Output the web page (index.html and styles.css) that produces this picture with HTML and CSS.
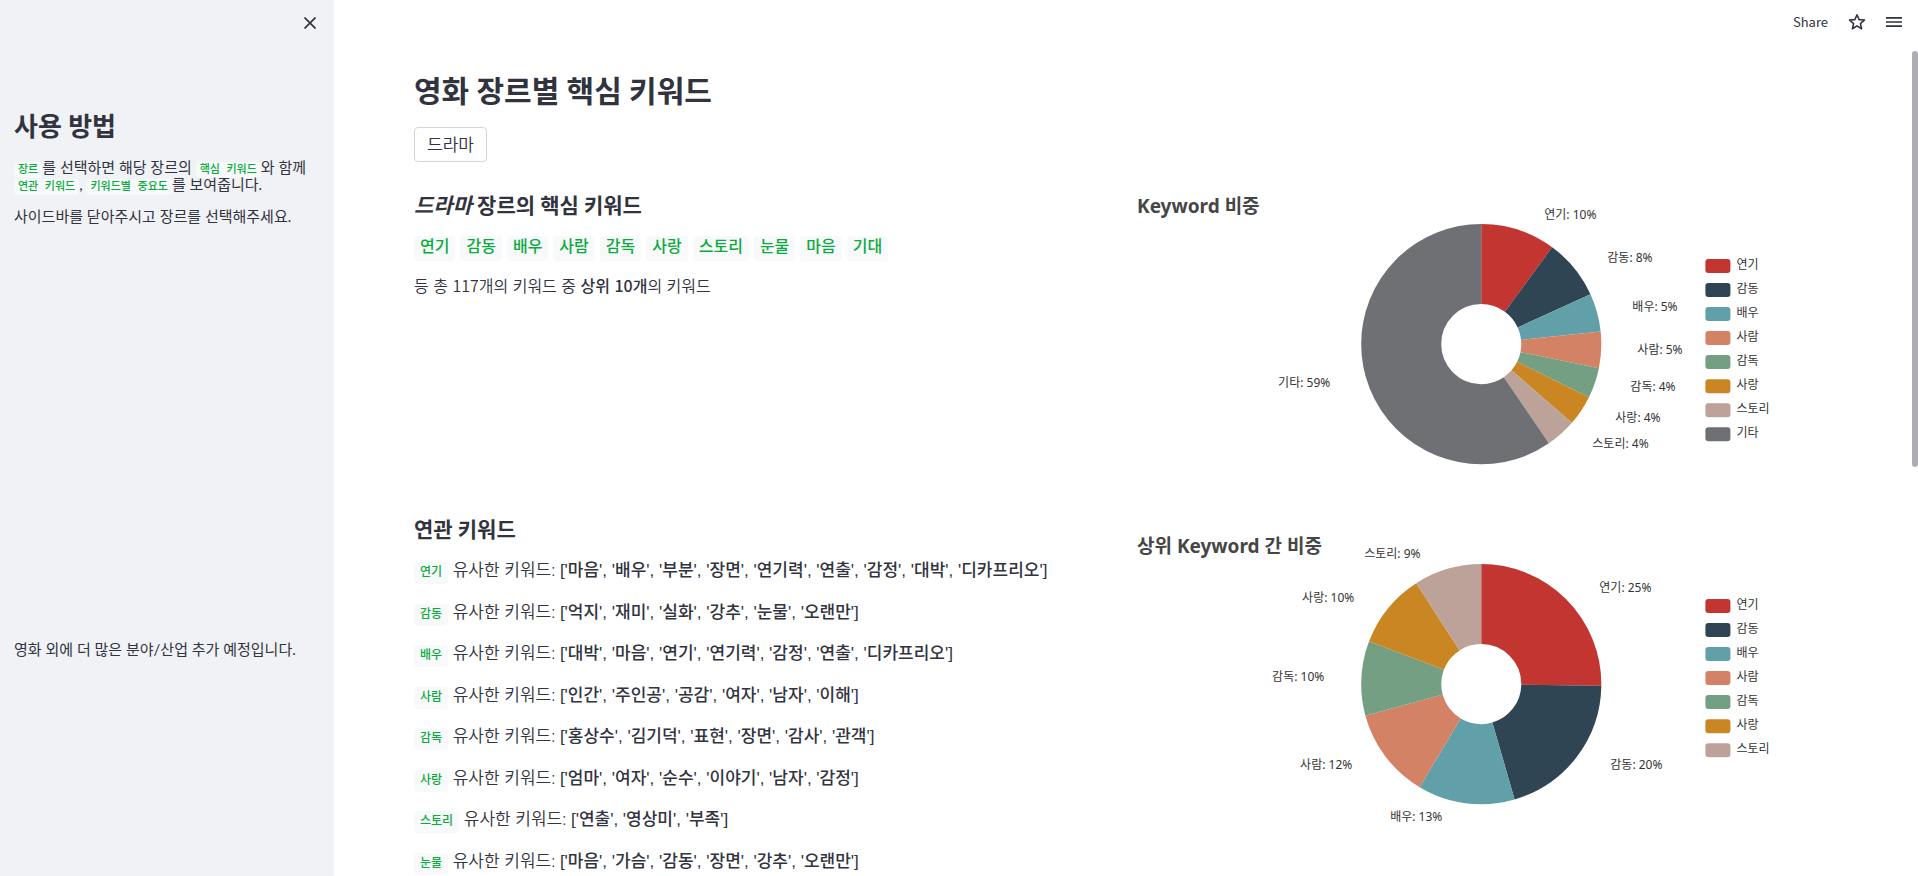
FILE: index.html
```html
<!DOCTYPE html>
<html lang="ko">
<head>
<meta charset="utf-8">
<meta name="viewport" content="width=device-width, initial-scale=1">
<title>영화 장르별 핵심 키워드</title>
<link rel="stylesheet" href="styles.css">
</head>
<body>
<div class="app">
  <aside class="sidebar">
    <button class="close" type="button" aria-label="닫기">
      <svg width="12" height="12" viewBox="0 0 12 12"><path d="M0.5 0.5L11.5 11.5M11.5 0.5L0.5 11.5" stroke="currentColor" stroke-width="1.7" fill="none"/></svg>
    </button>
    <div class="guide">
      <h2>사용 방법</h2>
      <p><code>장르</code>를 선택하면 해당 장르의 <code>핵심 키워드</code>와 함께 <code>연관 키워드</code>, <code>키워드별 중요도</code>를 보여줍니다.</p>
      <p>사이드바를 닫아주시고 장르를 선택해주세요.</p>
    </div>
    <p class="notice">영화 외에 더 많은 분야/산업 추가 예정입니다.</p>
  </aside>

  <div class="view">
    <header class="toolbar">
      <button type="button">Share</button>
      <button type="button" aria-label="즐겨찾기">
        <svg width="18" height="18" viewBox="0 0 16 16"><path d="M8 1.6L9.9 5.9L14.6 6.3L11 9.4L12.1 14L8 11.5L3.9 14L5 9.4L1.4 6.3L6.1 5.9Z" fill="none" stroke="currentColor" stroke-width="1.4" stroke-linejoin="round"/></svg>
      </button>
      <button type="button" aria-label="메뉴">
        <svg width="16" height="12" viewBox="0 0 16 12"><path d="M0 1.8H16M0 6H16M0 10.2H16" stroke="currentColor" stroke-width="1.7"/></svg>
      </button>
    </header>

    <main class="content">
      <h1>영화 장르별 핵심 키워드</h1>
      <button class="genre" type="button">드라마</button>

      <section class="columns summary">
        <div>
          <h3><em>드라마</em> 장르의 핵심 키워드</h3>
          <div class="tags">
            <code>연기</code><code>감동</code><code>배우</code><code>사람</code><code>감독</code><code>사랑</code><code>스토리</code><code>눈물</code><code>마음</code><code>기대</code>
          </div>
          <p class="total">등 총 117개의 키워드 중 <strong>상위 10개</strong>의 키워드</p>
        </div>
        <svg class="chart" viewBox="0 0 700 300" role="img" aria-label="Keyword 비중">
          <text class="chart-title" x="6" y="19">Keyword 비중</text>
          <g class="ring" transform="rotate(-90 350 150)">
            <circle class="c1" cx="350" cy="150" r="80" pathLength="360" stroke-dasharray="36.2 360"/>
            <circle class="c2" cx="350" cy="150" r="80" pathLength="360" stroke-dasharray="29.2 360" stroke-dashoffset="-36.2"/>
            <circle class="c3" cx="350" cy="150" r="80" pathLength="360" stroke-dasharray="18.5 360" stroke-dashoffset="-65.4"/>
            <circle class="c4" cx="350" cy="150" r="80" pathLength="360" stroke-dasharray="17.7 360" stroke-dashoffset="-83.9"/>
            <circle class="c5" cx="350" cy="150" r="80" pathLength="360" stroke-dasharray="14.7 360" stroke-dashoffset="-101.6"/>
            <circle class="c6" cx="350" cy="150" r="80" pathLength="360" stroke-dasharray="14.7 360" stroke-dashoffset="-116.3"/>
            <circle class="c7" cx="350" cy="150" r="80" pathLength="360" stroke-dasharray="14.7 360" stroke-dashoffset="-131"/>
            <circle class="c8" cx="350" cy="150" r="80" pathLength="360" stroke-dasharray="214.3 360" stroke-dashoffset="-145.7"/>
          </g>
          <g class="labels">
            <text x="413" y="25">연기: 10%</text>
            <text x="476" y="68">감동: 8%</text>
            <text x="501" y="117">배우: 5%</text>
            <text x="506" y="160">사람: 5%</text>
            <text x="499" y="197">감독: 4%</text>
            <text x="484" y="228">사랑: 4%</text>
            <text x="461" y="254">스토리: 4%</text>
            <text x="147" y="193">기타: 59%</text>
          </g>
          <g class="legend">
            <rect class="c1" x="574" y="65" width="25" height="14" rx="3"/><text x="605" y="75">연기</text>
            <rect class="c2" x="574" y="89" width="25" height="14" rx="3"/><text x="605" y="99">감동</text>
            <rect class="c3" x="574" y="113" width="25" height="14" rx="3"/><text x="605" y="123">배우</text>
            <rect class="c4" x="574" y="137" width="25" height="14" rx="3"/><text x="605" y="147">사람</text>
            <rect class="c5" x="574" y="161" width="25" height="14" rx="3"/><text x="605" y="171">감독</text>
            <rect class="c6" x="574" y="185" width="25" height="14" rx="3"/><text x="605" y="195">사랑</text>
            <rect class="c7" x="574" y="209" width="25" height="14" rx="3"/><text x="605" y="219">스토리</text>
            <rect class="c8" x="574" y="233" width="25" height="14" rx="3"/><text x="605" y="243">기타</text>
          </g>
        </svg>
      </section>

      <section class="columns related">
        <div>
          <h3>연관 키워드</h3>
          <p><code>연기</code> 유사한 키워드: <strong>['마음', '배우', '부분', '장면', '연기력', '연출', '감정', '대박', '디카프리오']</strong></p>
          <p><code>감동</code> 유사한 키워드: <strong>['억지', '재미', '실화', '강추', '눈물', '오랜만']</strong></p>
          <p><code>배우</code> 유사한 키워드: <strong>['대박', '마음', '연기', '연기력', '감정', '연출', '디카프리오']</strong></p>
          <p><code>사람</code> 유사한 키워드: <strong>['인간', '주인공', '공감', '여자', '남자', '이해']</strong></p>
          <p><code>감독</code> 유사한 키워드: <strong>['홍상수', '김기덕', '표현', '장면', '감사', '관객']</strong></p>
          <p><code>사랑</code> 유사한 키워드: <strong>['엄마', '여자', '순수', '이야기', '남자', '감정']</strong></p>
          <p><code>스토리</code> 유사한 키워드: <strong>['연출', '영상미', '부족']</strong></p>
          <p><code>눈물</code> 유사한 키워드: <strong>['마음', '가슴', '감동', '장면', '강추', '오랜만']</strong></p>
        </div>
        <svg class="chart" viewBox="0 0 700 300" role="img" aria-label="상위 Keyword 간 비중">
          <text class="chart-title" x="6" y="19">상위 Keyword 간 비중</text>
          <g class="ring" transform="rotate(-90 350 150)">
            <circle class="c1" cx="350" cy="150" r="80" pathLength="360" stroke-dasharray="90.8 360"/>
            <circle class="c2" cx="350" cy="150" r="80" pathLength="360" stroke-dasharray="73 360" stroke-dashoffset="-90.8"/>
            <circle class="c3" cx="350" cy="150" r="80" pathLength="360" stroke-dasharray="47.1 360" stroke-dashoffset="-163.8"/>
            <circle class="c4" cx="350" cy="150" r="80" pathLength="360" stroke-dasharray="43.8 360" stroke-dashoffset="-210.9"/>
            <circle class="c5" cx="350" cy="150" r="80" pathLength="360" stroke-dasharray="36.2 360" stroke-dashoffset="-254.7"/>
            <circle class="c6" cx="350" cy="150" r="80" pathLength="360" stroke-dasharray="36.3 360" stroke-dashoffset="-290.9"/>
            <circle class="c7" cx="350" cy="150" r="80" pathLength="360" stroke-dasharray="32.8 360" stroke-dashoffset="-327.2"/>
          </g>
          <g class="labels">
            <text x="468" y="58">연기: 25%</text>
            <text x="479" y="235">감동: 20%</text>
            <text x="259" y="287">배우: 13%</text>
            <text x="169" y="235">사람: 12%</text>
            <text x="141" y="147">감독: 10%</text>
            <text x="171" y="68">사랑: 10%</text>
            <text x="233" y="24">스토리: 9%</text>
          </g>
          <g class="legend">
            <rect class="c1" x="574" y="65" width="25" height="14" rx="3"/><text x="605" y="75">연기</text>
            <rect class="c2" x="574" y="89" width="25" height="14" rx="3"/><text x="605" y="99">감동</text>
            <rect class="c3" x="574" y="113" width="25" height="14" rx="3"/><text x="605" y="123">배우</text>
            <rect class="c4" x="574" y="137" width="25" height="14" rx="3"/><text x="605" y="147">사람</text>
            <rect class="c5" x="574" y="161" width="25" height="14" rx="3"/><text x="605" y="171">감독</text>
            <rect class="c6" x="574" y="185" width="25" height="14" rx="3"/><text x="605" y="195">사랑</text>
            <rect class="c7" x="574" y="209" width="25" height="14" rx="3"/><text x="605" y="219">스토리</text>
          </g>
        </svg>
      </section>
    </main>
    <div class="scroll-thumb"></div>
  </div>
</div>
</body>
</html>
```
FILE: styles.css
```css
* {
  box-sizing: border-box;
}

body {
  margin: 0;
  color: #31333f;
  background: #fff;
  font-family: Lato, "Noto Sans CJK KR", sans-serif;
  font-size: 17px;
  font-weight: 350;
  line-height: 1.5;
}

button {
  padding: 0;
  border: 0;
  background: none;
  color: inherit;
  font: inherit;
  cursor: pointer;
}

h1, h2, h3, p {
  margin: 0;
}

strong {
  font-weight: 500;
}

code {
  padding: 4px 6px;
  border-radius: 4px;
  background: #f8f9fb;
  color: #09ab3b;
  font-family: "Liberation Mono", "Noto Sans CJK KR", monospace;
  font-size: 12px;
  font-weight: 500;
  line-height: 1;
}

.app {
  display: flex;
  height: 100vh;
  overflow: hidden;
}

/* Sidebar */
.sidebar {
  display: flex;
  flex-direction: column;
  flex: 0 0 334px;
  padding: 14px 14px 0;
  background: #f0f2f6;
  font-size: 15px;
  font-weight: 400;
  line-height: 17px;
}

.close {
  display: flex;
  align-self: flex-end;
  margin: 3px 4px 0 0;
}

.guide {
  display: flex;
  flex-direction: column;
  gap: 15px;
  margin-top: 79px;
}

.guide h2 {
  font-size: 26px;
  font-weight: 700;
  line-height: 36px;
}

.sidebar code {
  padding: 2px 4px;
  font-size: 11px;
}

.notice {
  margin-top: 416px;
}

/* Main view */
.view {
  position: relative;
  flex: 1;
  min-width: 0;
  overflow: hidden;
}

.toolbar {
  position: absolute;
  top: 0;
  right: 16px;
  display: flex;
  align-items: center;
  gap: 20px;
  height: 44px;
  font-family: "Noto Sans CJK KR", sans-serif;
  font-size: 13px;
  font-weight: 400;
}

.toolbar svg {
  display: block;
}

.content {
  padding: 66px 87px 0 80px;
}

h1 {
  font-size: 30px;
  font-weight: 700;
  line-height: 48px;
}

.genre {
  display: block;
  margin-top: 13px;
  padding: 4px 12px;
  border: 1px solid #d6d6d9;
  border-radius: 4px;
  line-height: 25px;
}

.columns {
  display: grid;
  grid-template-columns: 1fr 1fr;
  gap: 16px;
  align-items: start;
}

.summary {
  margin-top: 32px;
}

.related {
  margin-top: 24px;
}

.related > div {
  display: flex;
  flex-direction: column;
  gap: 16px;
}

.related strong {
  font-family: "Liberation Sans", "Noto Sans CJK KR", sans-serif;
  line-height: 1;
}

h3 {
  font-size: 21px;
  font-weight: 700;
  line-height: 22px;
}

.related h3 {
  margin-bottom: 1px;
}

.tags {
  display: flex;
  flex-wrap: wrap;
  gap: 5px;
  margin: 20px 0 12px;
}

.tags code {
  padding: 0 6px;
  font-size: 16px;
  line-height: 25px;
}

.total {
  font-family: "Noto Sans CJK KR", sans-serif;
  font-size: 16px;
}

.chart {
  display: block;
  width: 100%;
  font-family: "Noto Sans", "Noto Sans CJK KR", sans-serif;
  font-size: 12px;
  font-weight: 400;
  overflow: visible;
}

.related .chart {
  margin-top: 16px;
}

.chart text {
  fill: #333;
}

.chart .chart-title {
  fill: #464646;
  font-size: 19px;
  font-weight: 700;
}

.ring circle {
  fill: none;
  stroke-width: 80;
}

.ring .c1 { stroke: #c23531; }
.ring .c2 { stroke: #2f4554; }
.ring .c3 { stroke: #61a0a8; }
.ring .c4 { stroke: #d48265; }
.ring .c5 { stroke: #749f83; }
.ring .c6 { stroke: #ca8622; }
.ring .c7 { stroke: #bda29a; }
.ring .c8 { stroke: #6e7074; }

.legend .c1 { fill: #c23531; }
.legend .c2 { fill: #2f4554; }
.legend .c3 { fill: #61a0a8; }
.legend .c4 { fill: #d48265; }
.legend .c5 { fill: #749f83; }
.legend .c6 { fill: #ca8622; }
.legend .c7 { fill: #bda29a; }
.legend .c8 { fill: #6e7074; }

.scroll-thumb {
  position: absolute;
  top: 51px;
  right: 0;
  width: 6px;
  height: 416px;
  border-radius: 3px;
  background: #adadb2;
}
```
